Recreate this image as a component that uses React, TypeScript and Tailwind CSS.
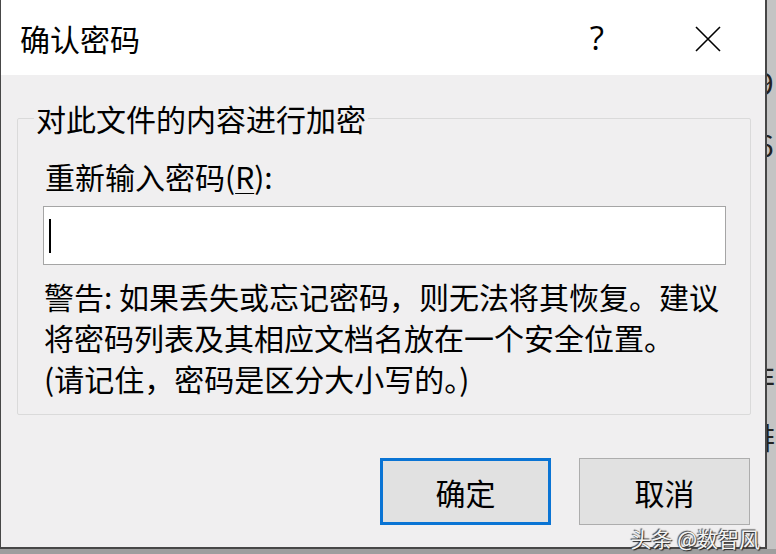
export default function App() {
  return (
    <div className="relative w-[776px] h-[554px] bg-[#9e9e9e] flex items-start overflow-hidden font-['Noto_Sans_CJK_SC',sans-serif] text-black">
      {/* dialog */}
      <div className="w-[767px] h-[549px] flex flex-col bg-white border-l border-r-2 border-b-2 border-[#474747]">
        <div className="h-[75px] shrink-0 flex items-center pl-[19px] pr-[44px]">
          <span className="text-[30px] leading-none">确认密码</span>
          <span className="ml-auto mr-[91px] text-[33px] leading-none font-['Open_Sans',sans-serif]">?</span>
          <svg width="26" height="26" viewBox="0 0 26 26" className="mt-[2px]">
            <path d="M1 1 L25 25 M25 1 L1 25" stroke="#000" strokeWidth="1.6" fill="none" />
          </svg>
        </div>

        <div className="flex-1 bg-[#f0eff0] flex flex-col pt-[24px] text-[30px]">
          <fieldset className="ml-[16px] w-[734px] h-[316px] border border-[#dadada] rounded-[2px] pl-[25px]">
            <legend className="-ml-[9px] px-[2px] leading-[38px]">对此文件的内容进行加密</legend>
            <div className="mt-[20px] pl-[2px] leading-[38px]">
              重新输入密码(<span className="underline underline-offset-4 decoration-1">R</span>):
            </div>
            <div className="mt-[11px] w-[683px] h-[59px] bg-white border border-[#a5a5a5] flex items-center pl-[5px]">
              <div className="w-[2px] h-[34px] bg-black" />
            </div>
            <div className="mt-[11px] pl-[1px] leading-[41px]">
              <div>警告: 如果丢失或忘记密码，则无法将其恢复。建议</div>
              <div>将密码列表及其相应文档名放在一个安全位置。</div>
              <div>(请记住，密码是区分大小写的。)</div>
            </div>
          </fieldset>

          <div className="mt-[43px] flex justify-end gap-[28px] pr-[15px]">
            <button className="w-[171px] h-[67px] bg-[#e1e1e1] border-[3px] border-[#0a74d4] leading-none">确定</button>
            <button className="w-[171px] h-[67px] bg-[#e1e1e1] border border-[#adadad] leading-none">取消</button>
          </div>
        </div>
      </div>

      {/* background window peeking on the right */}
      <div className="w-[9px] h-[549px] overflow-hidden bg-[#c4c4c4] flex flex-col text-[30px] leading-[40px] text-[#222]">
        <div className="mt-[62px] -ml-[10px]">9</div>
        <div className="mt-[22px] -ml-[10px]">6</div>
        <div className="mt-[192px] -ml-[22px]">非</div>
        <div className="mt-[20px] -ml-[22px]">排</div>
      </div>

      <div className="absolute right-[16px] bottom-[5px] text-[21px] leading-none text-[#f4f4f4] [text-shadow:1px_1px_1px_#222,-1px_-1px_1px_#444]">
        头条 @数智风
      </div>
    </div>
  )
}
